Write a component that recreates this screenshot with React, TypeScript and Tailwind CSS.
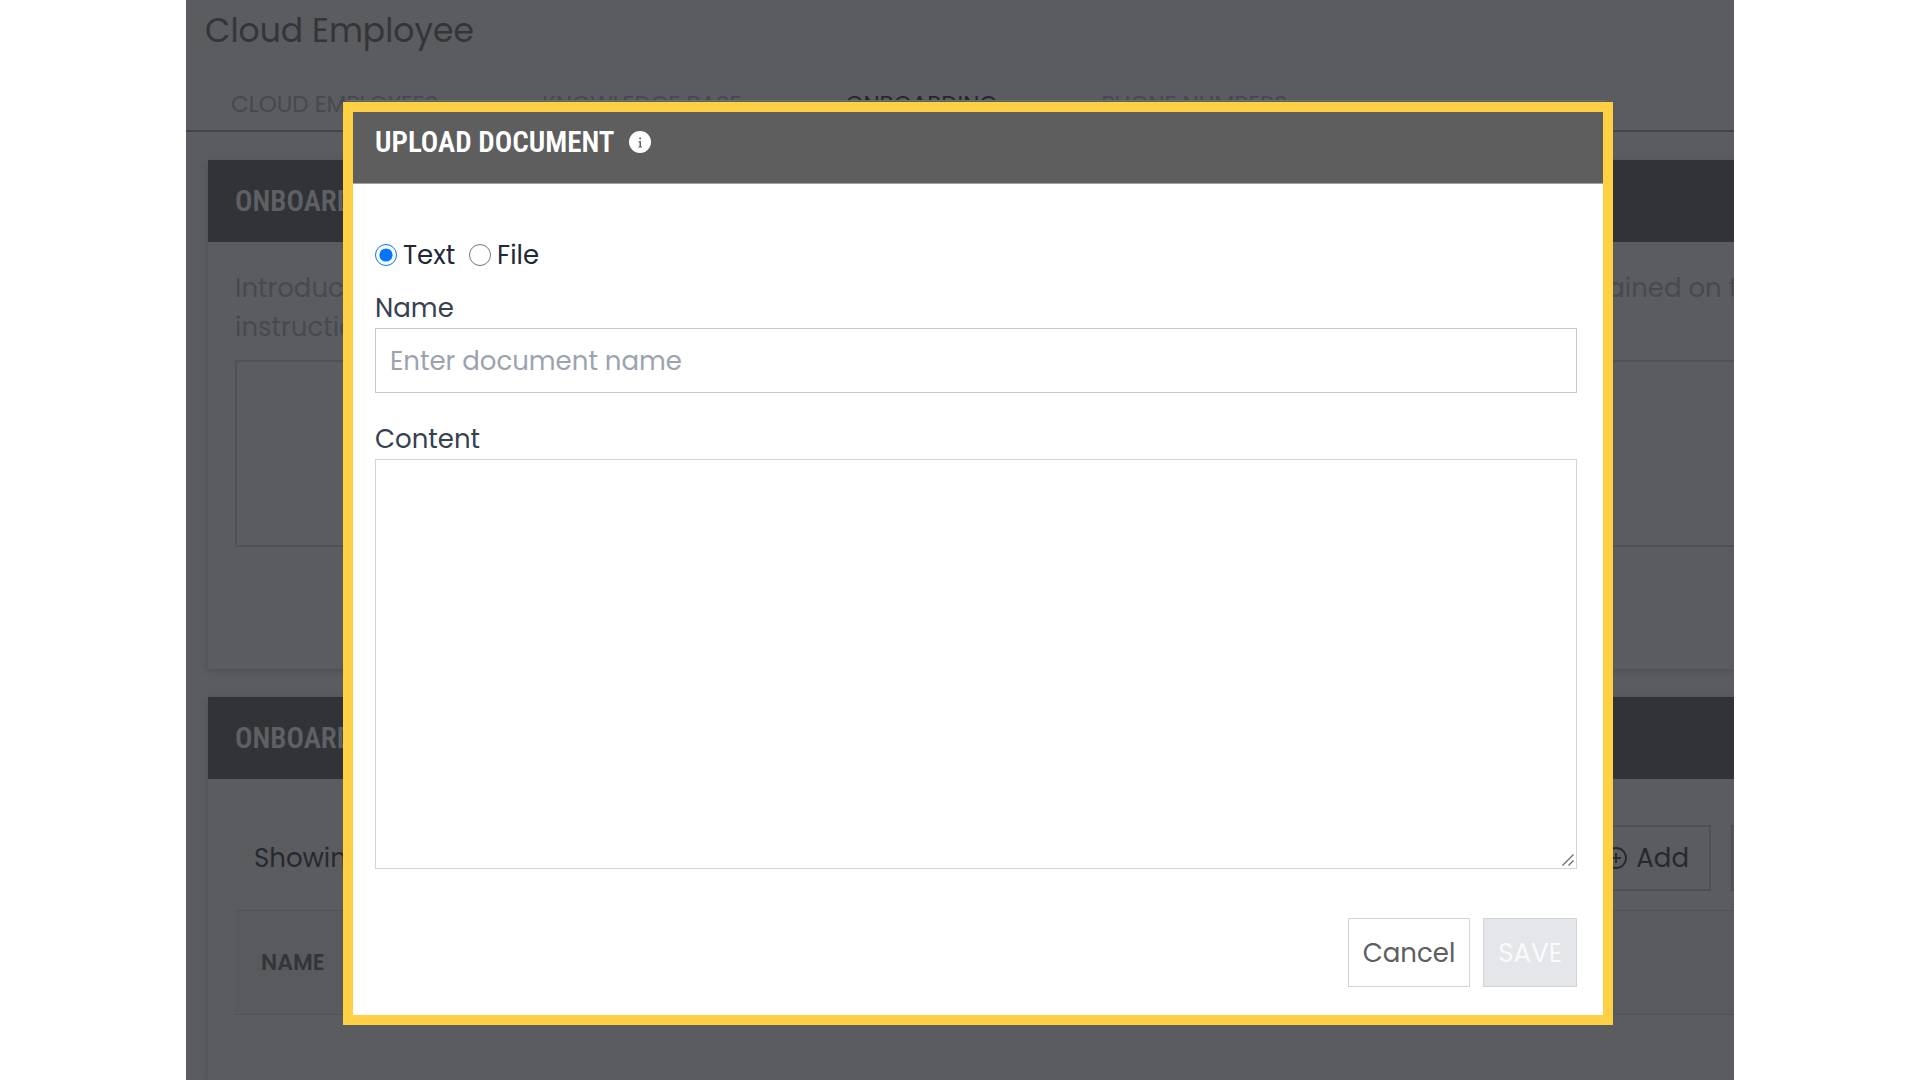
import * as React from "react";

const TABS = ["Cloud Employees", "Knowledge Base", "Onboarding", "Phone Numbers"];

function CardHeader({ children }: { children: React.ReactNode }) {
  return (
    <h2 className="bg-[#323337] px-[27px] py-[25px] font-['Roboto_Condensed','Liberation_Sans_Narrow',sans-serif] text-[29px] leading-8 font-semibold whitespace-nowrap text-[#5f6064] uppercase">
      {children}
    </h2>
  );
}

function InfoIcon() {
  return (
    <svg viewBox="0 0 24 24" className="size-6" aria-hidden="true">
      <circle cx="12" cy="12" r="11" fill="#fff" />
      <path d="M11.3 7.4h1.7v1.8h-1.7zM10.6 11.2H13v5.2h1v1.2h-3.6v-1.2h1.1v-4h-.9z" fill="#5e5e5e" />
    </svg>
  );
}

function PlusCircleIcon() {
  return (
    <svg viewBox="0 0 24 24" className="size-6" fill="none" stroke="currentColor" strokeWidth="1.8" aria-hidden="true">
      <circle cx="12" cy="12" r="10" />
      <path d="M12 7v10M7 12h10" />
    </svg>
  );
}

function OnboardingPage() {
  return (
    <div className="flex h-full flex-col">
      <h1 className="px-[19px] pt-[11px] text-[33px] leading-10 text-[#343539]">Cloud Employee</h1>
      <nav className="mt-[33px] flex gap-[104px] border-b-2 border-[#43444c] pb-1.5 pl-[45px]">
        {TABS.map((tab) => (
          <a
            key={tab}
            href="#"
            className={
              tab === "Onboarding"
                ? "text-[23px] leading-10 whitespace-nowrap text-[#26272c] uppercase"
                : "text-[23px] leading-10 whitespace-nowrap text-[#47484f] uppercase"
            }
          >
            {tab}
          </a>
        ))}
      </nav>

      <div className="flex flex-1 flex-col gap-7 pt-7 pl-[22px]">
        <section className="pb-[122px] shadow-[0_2px_8px_rgba(0,0,0,0.15)]">
          <CardHeader>Onboarding</CardHeader>
          <div className="pt-[27px] pl-[27px]">
            <div className="flex justify-between leading-[39px] text-[#484950]">
              <p className="w-[125px] overflow-hidden">
                Introduce
                <br />
                instructions
              </p>
              <p className="w-[146px] whitespace-nowrap">trained on the</p>
            </div>
            <textarea
              aria-label="Introduction"
              rows={4}
              className="mt-[13px] block h-[187px] w-full resize-none border-2 border-r-0 border-[#505155] bg-transparent"
            />
          </div>
        </section>

        <section className="flex-1 shadow-[0_2px_8px_rgba(0,0,0,0.15)]">
          <CardHeader>Onboarding</CardHeader>
          <div className="pt-[46px] pl-[27px]">
            <div className="flex items-center gap-[21px] pl-[19px] text-[#26292f]">
              <span className="flex-1">Showing</span>
              <button type="button" className="flex items-center gap-2 border-2 border-[#4f5054] px-5 py-3 leading-[38px]">
                <PlusCircleIcon />
                Add
              </button>
              <span className="-ml-px h-[66px] w-[3px] border-y-2 border-l-2 border-[#4f5054]" />
            </div>
            <table className="mt-[19px] w-full">
              <thead>
                <tr className="border-y border-[#525357] bg-[#595a5d]">
                  <th className="px-[26px] py-8 text-left text-[22px] leading-[39px] font-semibold text-[#343539]">NAME</th>
                </tr>
              </thead>
            </table>
          </div>
        </section>
      </div>
    </div>
  );
}

function UploadDocumentDialog() {
  const [kind, setKind] = React.useState<"text" | "file">("text");
  const [name, setName] = React.useState("");
  const [content, setContent] = React.useState("");

  return (
    <div role="dialog" aria-labelledby="upload-title">
      <div className="mr-2 ml-1 h-0.5 border-t border-[#6d6e72] bg-[#5e5f62]" />
      <div className="border-10 border-[#ffd043] bg-white">
        <header className="flex items-center gap-3.5 border-b border-[#a3a3a3] bg-[#5e5e5e] pt-3.5 pb-[25px] pl-[22px]">
          <h2
            id="upload-title"
            className="font-['Roboto_Condensed','Liberation_Sans_Narrow',sans-serif] text-[29px] leading-8 font-semibold text-white"
          >
            UPLOAD DOCUMENT
          </h2>
          <InfoIcon />
        </header>

        <form className="flex flex-col pt-[51px] pr-[26px] pb-7 pl-[22px]" onSubmit={(e) => e.preventDefault()}>
          <div className="flex gap-3.5 leading-10 text-[#1f2937]">
            <label className="flex items-center gap-1.5">
              <input
                type="radio"
                name="kind"
                className="size-[22px] accent-[#0075ff]"
                checked={kind === "text"}
                onChange={() => setKind("text")}
              />
              Text
            </label>
            <label className="flex items-center gap-1.5">
              <input
                type="radio"
                name="kind"
                className="size-[22px] accent-[#0075ff]"
                checked={kind === "file"}
                onChange={() => setKind("file")}
              />
              File
            </label>
          </div>

          <label htmlFor="doc-name" className="mt-[13px] leading-10 text-[#374151]">
            Name
          </label>
          <input
            id="doc-name"
            type="text"
            placeholder="Enter document name"
            value={name}
            onChange={(e) => setName(e.target.value)}
            className="border border-[#c8c8c8] px-3.5 pt-[13px] pb-[11px] leading-[39px] text-[#374151] placeholder:text-[#9ca3af]"
          />

          <label htmlFor="doc-content" className="mt-[26px] leading-10 text-[#374151]">
            Content
          </label>
          <div className="relative">
            <textarea
              id="doc-content"
              value={content}
              onChange={(e) => setContent(e.target.value)}
              className="block h-[410px] w-full resize-none border border-[#d1d5db] px-3.5 py-3"
            />
            <svg
              viewBox="0 0 12 12"
              className="pointer-events-none absolute right-[3px] bottom-[3px] size-3"
              fill="none"
              stroke="#6b6b6b"
              strokeWidth="1.3"
              aria-hidden="true"
            >
              <path d="M.5 11.5 11.5.5M6.5 11.5l5-5" />
            </svg>
          </div>

          <div className="mt-[49px] flex justify-end gap-[13px]">
            <button type="button" className="border border-[#d1d5db] px-3.5 pt-[15px] pb-[13px] leading-[39px] text-[#5e5e5e]">
              Cancel
            </button>
            <button
              type="submit"
              disabled
              className="border border-[#d1d5db] bg-[#e5e6ea] px-3.5 pt-[15px] pb-[13px] leading-[39px] text-[#f9fafb]"
            >
              SAVE
            </button>
          </div>
        </form>
      </div>
    </div>
  );
}

export default function App() {
  return (
    <div className="h-screen bg-white font-['Poppins','Inter',sans-serif] text-[26px]">
      <div className="relative mx-auto h-full w-[80.625%] overflow-hidden bg-[#5b5c60]">
        <OnboardingPage />
        <div className="absolute inset-0 pt-[100px] pr-[121px] pl-[157px]">
          <UploadDocumentDialog />
        </div>
      </div>
    </div>
  );
}
